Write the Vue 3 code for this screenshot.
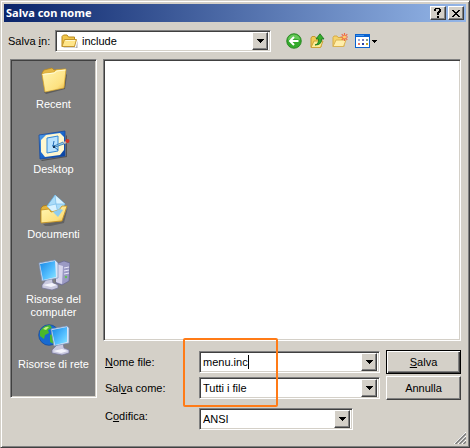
<script setup>
import { ref } from 'vue'

const folder = ref('include')
const fileName = ref('menu.inc')
const fileType = ref('Tutti i file')
const encoding = ref('ANSI')
</script>

<template>
  <main class="dialog">
    <header class="titlebar">
      <h1>Salva con nome</h1>
      <button class="cap" type="button" aria-label="Guida">
        <svg width="8" height="10" viewBox="0 0 8 10" shape-rendering="crispEdges"><path d="M1 0h5v1h1v3h-1v1h-1v2h-2v-3h1v-1h1v-2h-3v2h-2v-2h1zM3 8h2v2h-2z" /></svg>
      </button>
      <button class="cap" type="button" aria-label="Chiudi">
        <svg width="8" height="7" viewBox="0 0 8 7" shape-rendering="crispEdges"><path d="M0 0h2v1h1v1h2v-1h1v-1h2v1h-1v1h-1v1h-1v1h1v1h1v1h1v1h-2v-1h-1v-1h-2v1h-1v1h-2v-1h1v-1h1v-1h1v-1h-1v-1h-1v-1h-1z" /></svg>
      </button>
    </header>

    <div class="lookin">
      <label for="folder">Salva <u>i</u>n:</label>
      <div class="combo folder">
        <svg class="lead" width="17" height="15" viewBox="0 0 17 15">
          <path d="M2 13.5h13l1.5-7v7.5H3z" fill="#777" opacity=".6" />
          <path d="M1 12.5V2.5L2.500 1h3.500l1.500 2h6v9.500z" fill="#f3c74b" stroke="#b98a1d" />
          <path d="M1 12.500L3.500 5.500h12l-2 7z" fill="#ffe68a" stroke="#c39630" />
          <path d="M4.500 6.500h9.500" stroke="#fff8cf" />
        </svg>
        <select id="folder" v-model="folder"><option>include</option></select>
        <span class="arrow"><svg width="7" height="4" viewBox="0 0 7 4" shape-rendering="crispEdges"><path d="M0 0h7v1h-1v1h-1v1h-1v1h-1v-1h-1v-1h-1v-1h-1z" /></svg></span>
      </div>
      <nav class="tools">
        <button type="button" aria-label="Indietro">
          <svg width="16" height="16" viewBox="0 0 16 16">
            <circle cx="8" cy="8" r="7.300" fill="#34a92c" stroke="#21801b" stroke-width=".8" />
            <path d="M2 7a6 5.500 0 0 1 12 0q-6-3-12 0z" fill="#8bdc78" opacity=".6" />
            <path d="M12.500 8H4.500M8 4L4 8l4 4" fill="none" stroke="#fff" stroke-width="2" />
          </svg>
        </button>
        <button type="button" aria-label="Cartella superiore">
          <svg width="16" height="16" viewBox="0 0 16 16">
            <path d="M2 14V5l1-1.500h3l1 1.500h5v9z" fill="#f1ca55" stroke="#c59a31" />
            <path d="M2 14.500L5 8h9l-2.500 6.500z" fill="#ffeb96" stroke="#cda339" />
            <path d="M6 12q4-1 3.500-6H7L11 .8 15 6h-2.500Q13 12 6 12z" fill="#36ad2d" stroke="#16751a" stroke-width=".8" />
          </svg>
        </button>
        <button type="button" aria-label="Nuova cartella">
          <svg width="16" height="16" viewBox="0 0 16 16">
            <path d="M1 13.500V4.500L2 3h3l1 1.500h6v9z" fill="#f5d36a" stroke="#d8ac44" />
            <path d="M1 13.500L4 7h10l-2.500 6.500z" fill="#ffeeaa" stroke="#dab353" />
            <path d="M12.500 0v8M8.500 4h8M9.700 1.200l5.600 5.600M15.300 1.200L9.700 6.800" stroke="#ef6846" stroke-width="1.200" />
            <circle cx="12.500" cy="4" r="1.600" fill="#ffd06b" />
          </svg>
        </button>
        <button class="views" type="button" aria-label="Visualizza">
          <svg width="22" height="16" viewBox="0 0 22 16" shape-rendering="crispEdges">
            <path d="M0 1h15v14H0z" fill="#0a62cf" /><path d="M1 4h13v10H1z" fill="#fff" />
            <path d="M1 2h8v1H1z" fill="#3f94f0" />
            <path d="M3 6h2v2H3z" fill="#9bacd8" /><path d="M7 6h2v2H7z" fill="#777dbb" /><path d="M11 6h2v2h-2z" fill="#7c9a92" />
            <path d="M3 10h2v2H3z" fill="#e97861" /><path d="M7 10h2v2H7z" fill="#293fa4" /><path d="M11 10h2v2h-2z" fill="#c9aa24" />
            <path d="M17 7h5v1h-1v1h-1v1h-1v-1h-1v-1h-1z" fill="#000" />
          </svg>
        </button>
      </nav>
    </div>

    <div class="body">
      <nav class="places">
        <a href="#recent">
          <svg width="32" height="32" viewBox="0 0 32 32">
            <defs><linearGradient id="gold" x2="1" y2="1"><stop stop-color="#fff6b4" /><stop offset=".7" stop-color="#fde180" /><stop offset="1" stop-color="#e5b038" /></linearGradient></defs>
            <path d="M6 28l19-4 3-14 1 1-2 14-19 5z" fill="#444" opacity=".6" />
            <path d="M4 9l2-3 8-2 2 2 11-1v5l-1 12-19 5z" fill="#e5b845" stroke="#b98517" stroke-width=".7" />
            <path d="M4 10l3-1 9-1 2-2 10-1-2 19-19 4z" fill="url(#gold)" stroke="#d4a32c" stroke-width=".7" />
            <path d="M4.500 10.500l12-1.500 2-2 9-1" fill="none" stroke="#fffbd7" />
          </svg>
          <span>Recent</span>
        </a>
        <a href="#desktop">
          <svg width="32" height="32" viewBox="0 0 32 32">
            <defs><linearGradient id="blue" x2="1" y2="1"><stop stop-color="#58a6ee" /><stop offset=".5" stop-color="#1867cf" /><stop offset="1" stop-color="#073c98" /></linearGradient></defs>
            <path d="M3 31l25-4V6l1 1v21L4 32z" fill="#333" opacity=".6" />
            <path d="M1 6l26-4v25L2 30z" fill="url(#blue)" stroke="#164a9e" stroke-width=".8" />
            <path d="M8 6l14-2 4 4v13l-4 5-15 2-4-5V11z" fill="#fff7cf" />
            <path d="M9 9l11-2v15l-11 2z" fill="#b9e3ff" stroke="#3389d8" />
            <path d="M16 12l-1 5 5 4M14 17l8-1" fill="none" stroke="#246db8" />
            <path d="M16 17l9-4 1 2-9 3z" fill="#8ecbf3" stroke="#29689c" stroke-width=".7" />
            <path d="M25 13l3-1 1 2-3 1z" fill="#bbb" /><circle cx="29.500" cy="12" r="2" fill="#cf3325" />
            <path d="M15 17h2v2h-2z" fill="#153657" />
          </svg>
          <span>Desktop</span>
        </a>
        <a href="#documenti">
          <svg width="32" height="32" viewBox="0 0 32 32">
            <path d="M5 30l19-3 6-14-4 16-18 4z" fill="#444" opacity=".5" />
            <path d="M3 28V14l2-2 5-1 2 2 12-1 2 3-3 12z" fill="#e4b43d" stroke="#a87812" stroke-width=".7" />
            <path d="M9 12L17 1l10 9-6 14z" fill="#aadcf9" stroke="#5caee4" stroke-width=".7" />
            <path d="M17 1l1 9 9 0M9 12l9-2 3 14" fill="#d8f2ff" stroke="#77bce8" stroke-width=".7" />
            <path d="M3 29V16l8-1 2 3 8-2 3-4h5l-5 15z" fill="url(#gold)" stroke="#c18d1b" stroke-width=".8" />
            <path d="M15 18l5 5 5-7-3-1z" fill="#8fcdf0" />
          </svg>
          <span>Documenti</span>
        </a>
        <a href="#computer">
          <svg width="32" height="32" viewBox="0 0 32 32">
            <defs><linearGradient id="screen" x2="1" y2="1"><stop stop-color="#1687e5" /><stop offset=".6" stop-color="#55bfff" /><stop offset="1" stop-color="#8be7ff" /></linearGradient></defs>
            <path d="M18 5l8-3 6 2-1 18-7 4-6-2z" fill="#9b9ac4" stroke="#66658f" stroke-width=".7" />
            <path d="M18 5l7 2-1 18-6-2z" fill="#d7d5ed" /><path d="M26 9l5-1M26 12l5-1M26 15l5-1" stroke="#e8e7fa" />
            <circle cx="28" cy="18" r="1.200" fill="#61c353" />
            <path d="M8 21l6-2 1 5 5 2v3l-6 2-10-2v-3z" fill="#c9c9df" stroke="#74749b" stroke-width=".7" />
            <path d="M5 26l9-2 5 2-6 2z" fill="#f4f4fc" />
            <path d="M1 4l16-3 3 3v15L4 22z" fill="#d9e5f7" stroke="#7790ba" stroke-width=".7" />
            <path d="M2 5l15-3 1 16L5 21z" fill="url(#screen)" />
          </svg>
          <span>Risorse del<br />computer</span>
        </a>
        <a href="#rete">
          <svg width="32" height="32" viewBox="0 0 32 32">
            <circle cx="11" cy="11" r="10.300" fill="#176ad1" stroke="#124695" stroke-width=".7" />
            <path d="M2 7q4-6 10-6l2 3-4 2 1 3-4 2-1 4-4-3zM12 11l5-2 3 5-4 6-4-2z" fill="#49b82d" />
            <path d="M5 5q3-3 6-2L8 6z" fill="#c4ef83" />
            <path d="M19 21l6-2 1 5 5 2v3l-7 2-10-2v-3z" fill="#c9c9df" stroke="#74749b" stroke-width=".7" />
            <path d="M15 27l9-2 6 2-7 2z" fill="#f4f4fc" />
            <path d="M13 5l16-3 2 2v15l-15 3z" fill="#d9e5f7" stroke="#7790ba" stroke-width=".7" />
            <path d="M14 6l15-3v15l-12 3z" fill="url(#screen)" />
          </svg>
          <span>Risorse di rete</span>
        </a>
      </nav>

      <section class="content">
        <div class="files" role="listbox" aria-label="File"></div>
        <form class="fields" @submit.prevent>
          <label for="name"><u>N</u>ome file:</label>
          <div class="combo">
            <input id="name" v-model="fileName" type="text" autocomplete="off" />
            <button class="arrow" type="button" aria-label="Apri elenco"><svg width="7" height="4" viewBox="0 0 7 4" shape-rendering="crispEdges"><path d="M0 0h7v1h-1v1h-1v1h-1v1h-1v-1h-1v-1h-1v-1h-1z" /></svg></button>
          </div>
          <button class="push default" type="submit"><span><u>S</u>alva</span></button>

          <label for="type">Sal<u>v</u>a come:</label>
          <div class="combo">
            <select id="type" v-model="fileType"><option>Tutti i file</option></select>
            <span class="arrow"><svg width="7" height="4" viewBox="0 0 7 4" shape-rendering="crispEdges"><path d="M0 0h7v1h-1v1h-1v1h-1v1h-1v-1h-1v-1h-1v-1h-1z" /></svg></span>
          </div>
          <button class="push" type="button">Annulla</button>

          <label for="enc">C<u>o</u>difica:</label>
          <div class="combo short">
            <select id="enc" v-model="encoding"><option>ANSI</option></select>
            <span class="arrow"><svg width="7" height="4" viewBox="0 0 7 4" shape-rendering="crispEdges"><path d="M0 0h7v1h-1v1h-1v1h-1v1h-1v-1h-1v-1h-1v-1h-1z" /></svg></span>
          </div>
          <div class="marker"></div>
        </form>
      </section>
    </div>
    <svg class="grip" width="12" height="12" viewBox="0 0 12 12">
      <path d="M0 12L12 0M4 12l8-8M8 12l4-4" stroke="#fff" />
      <path d="M1.500 12L12 1.500M5.500 12L12 5.500M9.500 12L12 9.500" stroke="#808080" stroke-width="1.600" />
    </svg>
  </main>
</template>

<style>
body {
  margin: 0;
}
</style>

<style scoped>
.dialog {
  position: relative;
  box-sizing: border-box;
  display: flex;
  flex-direction: column;
  min-height: 100vh;
  padding: 2px 2px 17px 2px;
  border: 1px solid #d4d0c8;
  border-right-color: #404040;
  border-bottom-color: #404040;
  box-shadow: inset 1px 1px #fff, inset -1px -1px #808080;
  background: #d4d0c8;
  color: #000;
  font: 11px/13px "Liberation Sans", Arial, sans-serif;
}
button, input, select {
  margin: 0;
  font: inherit;
  color: inherit;
}
u {
  text-underline-offset: 1px;
}
.titlebar {
  display: flex;
  align-items: center;
  height: 18px;
  margin: 1px;
  padding-right: 2px;
  background: linear-gradient(90deg, #0a246a, #94b6e8);
}
h1 {
  flex: 1;
  margin: 0;
  padding-left: 2px;
  color: #fff;
  font: bold 11px/16px "Noto Sans", sans-serif;
}
.cap {
  display: grid;
  place-items: center;
  width: 16px;
  height: 14px;
  padding: 0;
  margin-left: 2px;
}
.cap, .arrow, .push {
  border: 1px solid;
  border-color: #fff #404040 #404040 #fff;
  box-shadow: inset -1px -1px #808080;
  background: #d4d0c8;
}
.lookin {
  display: flex;
  align-items: center;
  padding: 7px 5px 7px;
}
.lookin label {
  width: 47px;
}
.combo {
  display: flex;
  align-items: center;
  box-sizing: border-box;
  height: 22px;
  min-width: 0;
  border: 1px solid;
  border-color: #808080 #fff #fff #808080;
  box-shadow: inset 1px 1px #404040, inset -1px -1px #d4d0c8;
  background: #fff;
  background-clip: padding-box;
  padding: 2px;
}
.folder {
  flex: 0 1 216px;
}
.lead {
  margin: 0 3px;
}
.combo select, .combo input {
  min-width: 0;
  padding: 0 1px;
  border: 0;
  outline: 0;
  border-radius: 0;
  background: transparent;
  appearance: none;
}
.combo select {
  flex: 1;
  height: 17px;
}
.combo input {
  field-sizing: content;
  height: 14px;
  padding-right: 0;
  border-right: 1px solid #000;
}
.arrow {
  display: grid;
  place-items: center;
  box-sizing: border-box;
  width: 16px;
  height: 18px;
  margin-left: auto;
  padding: 0;
  pointer-events: none;
}
.tools {
  display: flex;
  gap: 7px;
  margin-left: 15px;
}
.tools button {
  display: flex;
  padding: 0;
  border: 0;
  background: none;
}
.body {
  flex: 1;
  display: grid;
  grid-template-columns: 87px 1fr;
  gap: 6px;
  padding: 0 6px 0 7px;
}
.places, .files {
  border: 1px solid;
  border-color: #808080 #fff #fff #808080;
  box-shadow: inset 1px 1px #404040, inset -1px -1px #d4d0c8;
}
.places {
  display: flex;
  flex-direction: column;
  margin-bottom: 32px;
  padding-top: 4px;
  background: #808080;
}
.places a {
  display: flex;
  flex-direction: column;
  align-items: center;
  gap: 2px;
  min-height: 65px;
  color: #fff;
  text-align: center;
  text-decoration: none;
}
.places svg {
  display: block;
}
.content {
  display: flex;
  flex-direction: column;
  gap: 9px;
}
.files {
  flex: 1;
  background: #fff;
}
.fields {
  position: relative;
  display: grid;
  grid-template-columns: 90px 1fr 75px;
  column-gap: 6px;
  row-gap: 2px;
  align-items: center;
}
.fields label {
  padding-left: 2px;
}
.short {
  margin: 6px 27px 0 0;
}
.push {
  height: 24px;
  padding: 0;
}
.default {
  border-color: #000;
  box-shadow: inset 1px 1px #fff, inset -1px -1px #404040, inset -2px -2px #808080;
}
.marker {
  position: absolute;
  left: 80px;
  top: -12px;
  box-sizing: border-box;
  width: 95px;
  height: 69px;
  border: 2px solid #ff7b17;
  border-radius: 2px;
  pointer-events: none;
}
.grip {
  position: absolute;
  right: 3px;
  bottom: 3px;
}
</style>
